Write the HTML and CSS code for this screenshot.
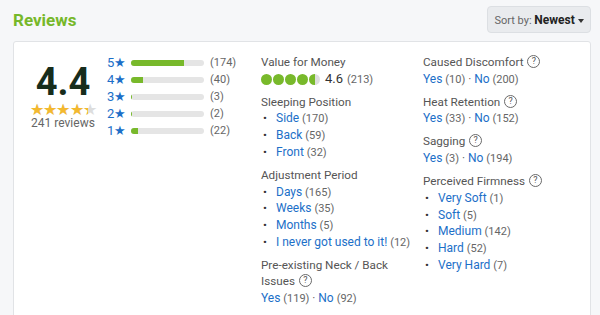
FILE: index.html
```html
<!DOCTYPE html>
<html lang="en">
<head>
    <meta charset="UTF-8">
    <title>Reviews</title>
    <link rel="stylesheet" href="styles.css">
</head>
<body>
    <div class="page">
        <div class="top-bar">
            <h2 class="title">Reviews</h2>
            <button class="sort-btn">Sort by: <b>Newest</b> <span class="caret"></span></button>
        </div>

        <div class="card">
            <div class="score">
                <div class="score-value">4.4</div>
                <div class="stars">
                    <span class="stars-bg">★★★★★</span>
                    <span class="stars-fg" style="width: 88%">★★★★★</span>
                </div>
                <div class="score-count">241 reviews</div>
            </div>

            <div class="breakdown">
                <div class="bd-row"><span class="bd-label">5★</span><span class="bar"><span class="bar-fill" style="width: 72.2%"></span></span><span class="count">(174)</span></div>
                <div class="bd-row"><span class="bd-label">4★</span><span class="bar"><span class="bar-fill" style="width: 16.6%"></span></span><span class="count">(40)</span></div>
                <div class="bd-row"><span class="bd-label">3★</span><span class="bar"><span class="bar-fill" style="width: 1.2%"></span></span><span class="count">(3)</span></div>
                <div class="bd-row"><span class="bd-label">2★</span><span class="bar"><span class="bar-fill" style="width: 0.8%"></span></span><span class="count">(2)</span></div>
                <div class="bd-row"><span class="bd-label">1★</span><span class="bar"><span class="bar-fill" style="width: 9.1%"></span></span><span class="count">(22)</span></div>
            </div>

            <div class="attrs">
                <div class="attr">
                    <div class="attr-name">Value for Money</div>
                    <div class="dots-line">
                        <span class="dot"></span><span class="dot"></span><span class="dot"></span><span class="dot"></span><span class="dot half"></span>
                        <span class="dot-score">4.6</span> <span class="count">(213)</span>
                    </div>
                </div>
                <div class="attr">
                    <div class="attr-name">Sleeping Position</div>
                    <ul class="opts">
                        <li><a href="#">Side</a> <span class="count">(170)</span></li>
                        <li><a href="#">Back</a> <span class="count">(59)</span></li>
                        <li><a href="#">Front</a> <span class="count">(32)</span></li>
                    </ul>
                </div>
                <div class="attr">
                    <div class="attr-name">Adjustment Period</div>
                    <ul class="opts">
                        <li><a href="#">Days</a> <span class="count">(165)</span></li>
                        <li><a href="#">Weeks</a> <span class="count">(35)</span></li>
                        <li><a href="#">Months</a> <span class="count">(5)</span></li>
                        <li><a href="#">I never got used to it!</a> <span class="count">(12)</span></li>
                    </ul>
                </div>
                <div class="attr">
                    <div class="attr-name">Pre-existing Neck / Back Issues <span class="help">?</span></div>
                    <div class="yn"><a href="#">Yes</a> <span class="count">(119)</span> · <a href="#">No</a> <span class="count">(92)</span></div>
                </div>
            </div>

            <div class="attrs">
                <div class="attr">
                    <div class="attr-name">Caused Discomfort <span class="help">?</span></div>
                    <div class="yn"><a href="#">Yes</a> <span class="count">(10)</span> · <a href="#">No</a> <span class="count">(200)</span></div>
                </div>
                <div class="attr">
                    <div class="attr-name">Heat Retention <span class="help">?</span></div>
                    <div class="yn"><a href="#">Yes</a> <span class="count">(33)</span> · <a href="#">No</a> <span class="count">(152)</span></div>
                </div>
                <div class="attr">
                    <div class="attr-name">Sagging <span class="help">?</span></div>
                    <div class="yn"><a href="#">Yes</a> <span class="count">(3)</span> · <a href="#">No</a> <span class="count">(194)</span></div>
                </div>
                <div class="attr">
                    <div class="attr-name">Perceived Firmness <span class="help">?</span></div>
                    <ul class="opts">
                        <li><a href="#">Very Soft</a> <span class="count">(1)</span></li>
                        <li><a href="#">Soft</a> <span class="count">(5)</span></li>
                        <li><a href="#">Medium</a> <span class="count">(142)</span></li>
                        <li><a href="#">Hard</a> <span class="count">(52)</span></li>
                        <li><a href="#">Very Hard</a> <span class="count">(7)</span></li>
                    </ul>
                </div>
            </div>
        </div>
    </div>
</body>
</html>
```

FILE: styles.css
```css
* {
    margin: 0;
    padding: 0;
    box-sizing: border-box;
}

body {
    background-color: #f6f7f9;
    font-family: Roboto, "Liberation Sans", sans-serif;
    color: #555;
    overflow: hidden;
}

.page {
    padding: 6px 9px 0 13px;
}

.top-bar {
    display: flex;
    justify-content: space-between;
    align-items: center;
    height: 27px;
    margin-bottom: 8px;
}

.title {
    font-size: 17px;
    font-weight: bold;
    color: #76b82a;
}

.sort-btn {
    height: 27px;
    width: 104px;
    border: 1px solid #dcdfe3;
    border-radius: 4px;
    background-color: #e9ebee;
    font-family: inherit;
    font-size: 11px;
    color: #666;
}

.sort-btn b {
    font-size: 12px;
    color: #222;
}

.caret {
    display: inline-block;
    vertical-align: middle;
    border-top: 4px solid #333;
    border-left: 3.5px solid transparent;
    border-right: 3.5px solid transparent;
}

.card {
    display: grid;
    grid-template-columns: 85px 154px 162px 1fr;
    background-color: #fff;
    border: 1px solid #e1e3e6;
    border-radius: 3px;
    padding: 12px 0 20px 8px;
    height: 300px;
}

/* score block */
.score {
    text-align: center;
    padding: 8px 3px 0 0;
    line-height: 14px;
}

.score-value {
    font-size: 38px;
    line-height: 40px;
    font-weight: bold;
    color: #172d1c;
}

.stars {
    position: relative;
    width: fit-content;
    height: 12px;
    margin: 2px auto 0;
    font-size: 16px;
    line-height: 12px;
    letter-spacing: -0.7px;
    white-space: nowrap;
}

.stars-bg {
    color: #ddd;
}

.stars-fg {
    position: absolute;
    left: 0;
    top: 0;
    overflow: hidden;
    white-space: nowrap;
    color: #f4b92f;
}

.score-count {
    font-size: 12px;
    color: #666;
    line-height: 14px;
}

/* rating breakdown */
.bd-row {
    display: flex;
    align-items: center;
    height: 17px;
}

.bd-label {
    width: 24px;
    font-size: 13px;
    color: #1c6fc8;
}

.bar {
    width: 73px;
    height: 6px;
    margin-right: 6px;
    border-radius: 3px;
    background-color: #e5e5e5;
    overflow: hidden;
}

.bar-fill {
    display: block;
    height: 100%;
    min-width: 1px;
    background-color: #78b92b;
}

.count {
    font-size: 11px;
    color: #666;
}

/* attribute columns */
.attrs {
    padding-right: 12px;
}

.attr {
    margin-bottom: 6.3px;
    font-size: 11.7px;
    line-height: 16.7px;
}

.attr a,
.attr .count {
    line-height: 1;
}

.attr-name {
    color: #555;
}

.help {
    display: inline-block;
    overflow: hidden;
    width: 13px;
    height: 13px;
    margin-left: 1px;
    border: 1px solid #6a6a6a;
    border-radius: 50%;
    font-size: 9px;
    line-height: 11px;
    text-align: center;
    color: #555;
    vertical-align: -2px;
}

a {
    color: #1c6fc8;
    text-decoration: none;
    font-size: 12px;
}

.opts {
    list-style: none;
}

.opts li::before {
    content: "•";
    display: inline-block;
    width: 13px;
    padding-left: 2px;
    color: #333;
}

.dots-line {
    display: flex;
    align-items: center;
    gap: 1px;
}

.dot {
    width: 11px;
    height: 11px;
    border-radius: 50%;
    background-color: #78b92b;
}

.dot.half {
    background: linear-gradient(to right, #78b92b 55%, #ddd 55%);
}

.dot-score {
    margin-left: 4px;
    font-size: 13px;
    color: #333;
}

.dots-line .count {
    margin-left: 3px;
}
```
